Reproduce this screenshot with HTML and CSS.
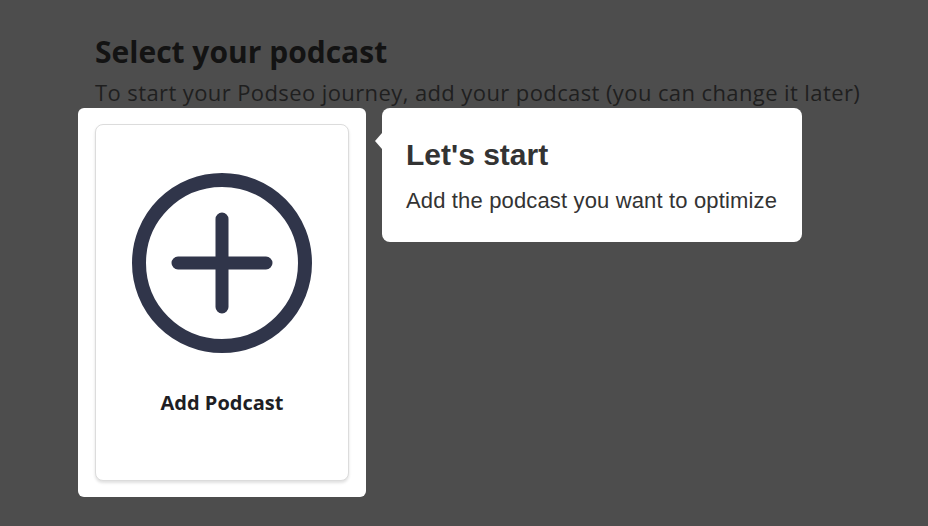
FILE: index.html
```html
<!DOCTYPE html>
<html lang="en">
<head>
    <meta charset="UTF-8">
    <title>Select your podcast</title>
    <link rel="stylesheet" href="styles.css">
</head>
<body>
    <main class="page">
        <h1 class="page-title">Select your podcast</h1>
        <p class="page-sub">To start your Podseo journey, add your podcast (you can change it later)</p>

        <!-- onboarding tour: highlighted card + tooltip -->
        <div class="spotlight">
            <button class="podcast-card">
                <svg class="add-icon" viewBox="0 0 180 180" width="180" height="180">
                    <circle cx="90" cy="90" r="83" fill="none" stroke="#30354a" stroke-width="14"/>
                    <path d="M90 46 V134 M46 90 H134" stroke="#30354a" stroke-width="13" stroke-linecap="round"/>
                </svg>
                <span class="card-label">Add Podcast</span>
            </button>

            <div class="tour-tip">
                <h2 class="tip-title">Let's start</h2>
                <p class="tip-text">Add the podcast you want to optimize</p>
            </div>
        </div>
    </main>
</body>
</html>
```

FILE: styles.css
```css
body {
    margin: 0;
    background: #4d4d4d;
    font-family: "Open Sans", Lato, sans-serif;
}

.page {
    padding: 34px 0 0 95px;
}

.page-title {
    margin: 0;
    font-size: 30px;
    font-weight: 700;
    color: #131313;
    line-height: 36px;
}

.page-sub {
    margin: 8px 0 0;
    font-size: 22px;
    color: #1f1f1f;
    line-height: 28px;
    letter-spacing: 0.4px;
}

/* Highlighted area */
.spotlight {
    position: relative;
    display: inline-block;
    margin: 2px 0 0 -17px;
    padding: 16px 17px;
    background: #fff;
    border-radius: 6px;
}

.podcast-card {
    display: flex;
    flex-direction: column;
    align-items: center;
    width: 254px;
    height: 357px;
    padding: 48px 0 0;
    background: #fff;
    border: 1px solid #dcdcdc;
    border-radius: 8px;
    box-shadow: 0 2px 3px rgba(0, 0, 0, 0.12);
    cursor: pointer;
    font-family: inherit;
}

.add-icon {
    display: block;
}

.card-label {
    margin-top: 36px;
    font-size: 20px;
    font-weight: 700;
    color: #1e1e24;
}

/* Tooltip */
.tour-tip {
    position: absolute;
    left: 304px;
    top: 0;
    width: 420px;
    height: 134px;
    box-sizing: border-box;
    padding: 30px 24px 0;
    background: #fff;
    border-radius: 8px;
    font-family: "Liberation Sans", Arial, sans-serif;
    color: #333;
}

.tour-tip::before {
    content: "";
    position: absolute;
    left: -7px;
    top: 25px;
    border-style: solid;
    border-width: 8px 7px 8px 0;
    border-color: transparent #fff transparent transparent;
}

.tip-title {
    margin: 0;
    font-size: 30px;
    font-weight: 700;
    line-height: 34px;
}

.tip-text {
    margin: 16px 0 0;
    font-size: 22px;
    line-height: 26px;
    letter-spacing: 0.15px;
}
```
